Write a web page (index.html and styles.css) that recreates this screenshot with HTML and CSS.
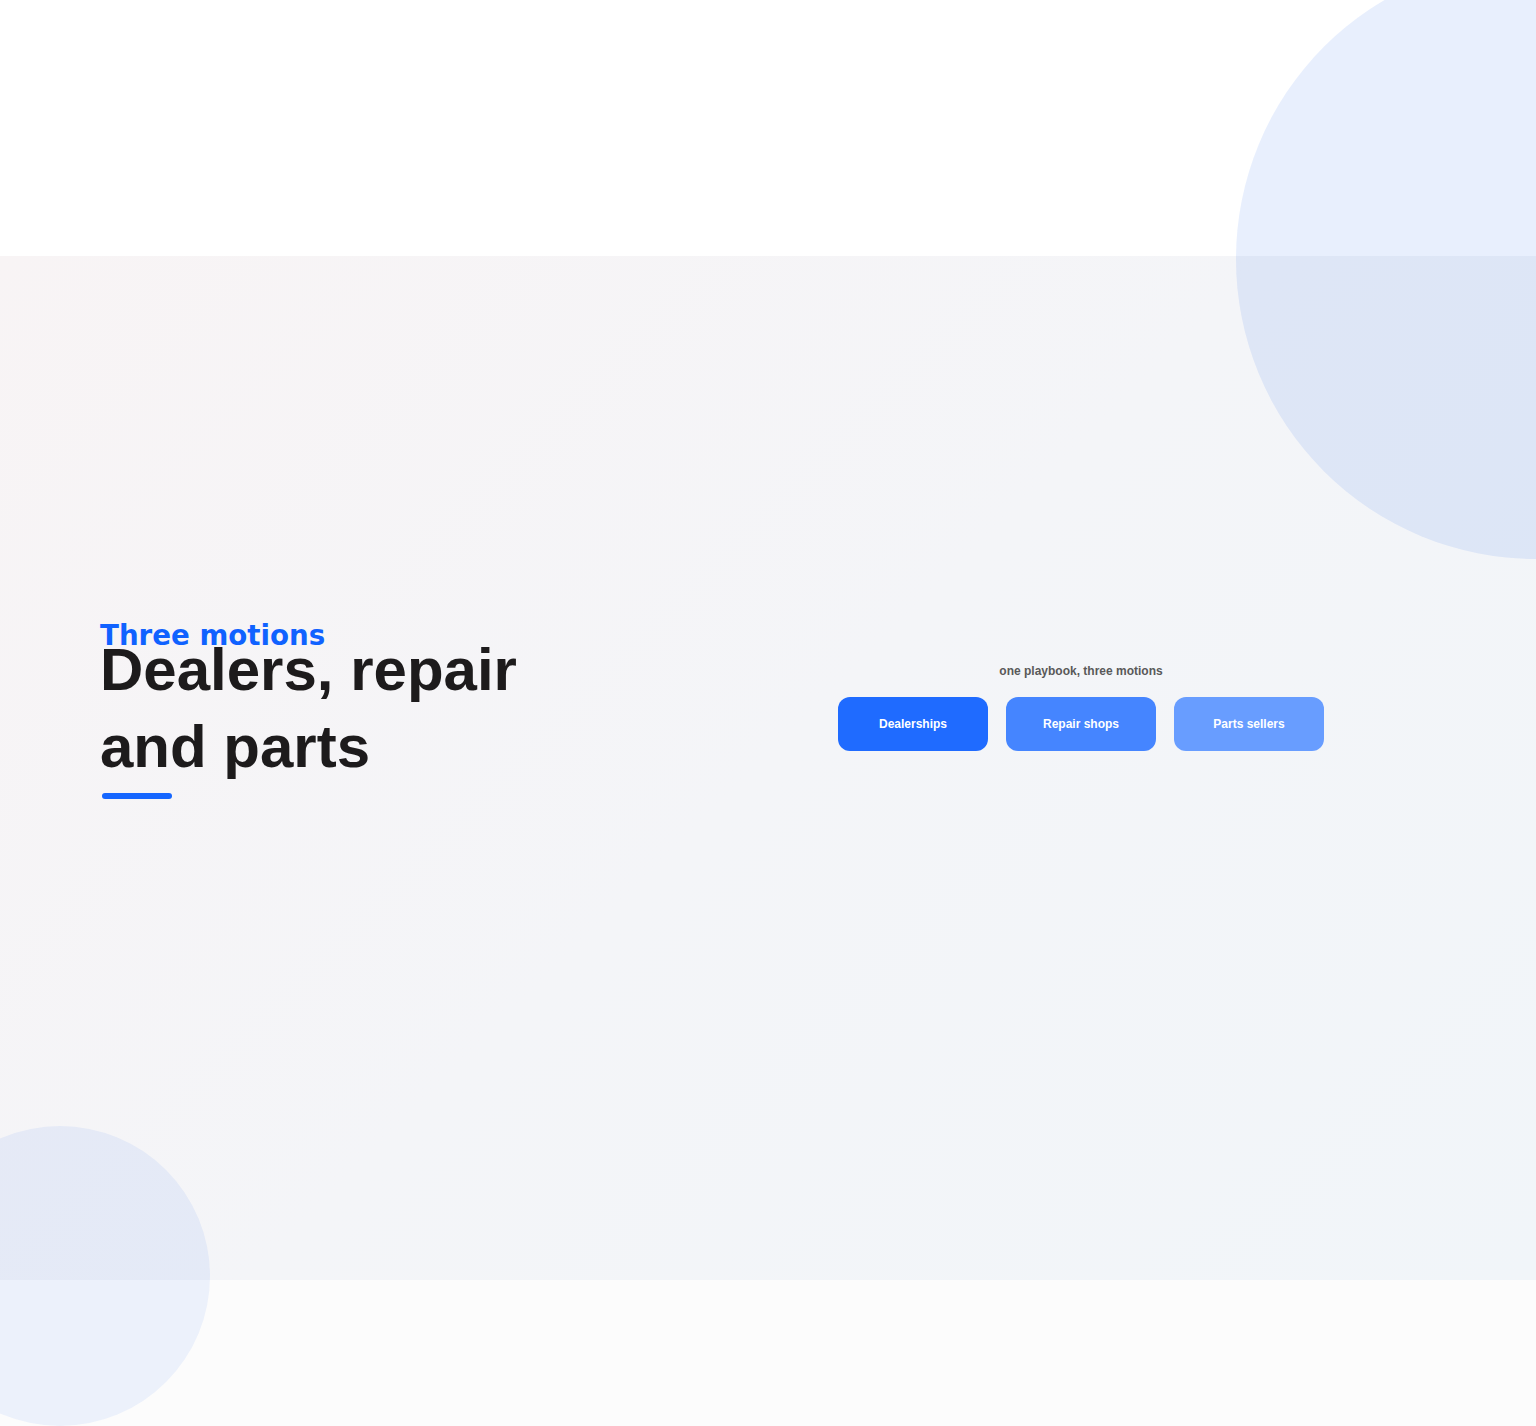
FILE: index.html
```html
<!DOCTYPE html>
<html>
  <head>
    <title>Three motions</title>
    <link rel="stylesheet" href="styles.css">
  </head>
  <body>
    <div class="page">
      <div class="spacer-top"></div>

      <section class="motions">
        <div class="intro">
          <div class="eyebrow">Three motions</div>
          <h1 class="title">Dealers, repair and parts</h1>
          <div class="rule"></div>
        </div>

        <div class="picker">
          <p class="picker-label">one playbook, three motions</p>
          <div class="picker-row">
            <button class="motion motion-1">Dealerships</button>
            <button class="motion motion-2">Repair shops</button>
            <button class="motion motion-3">Parts sellers</button>
          </div>
        </div>
      </section>

      <div class="spacer-bottom"></div>

      <div class="blob blob-top"></div>
      <div class="blob blob-bottom"></div>
    </div>
  </body>
</html>
```

FILE: styles.css
```css
html, body {
  margin: 0;
  background: #fff;
}

.page {
  position: relative;
  overflow: hidden;
  height: 1426px;
  font-family: "Liberation Sans", Arial, sans-serif;
}

.spacer-top {
  height: 256px;
  background: #fff;
}

.spacer-bottom {
  height: 146px;
  background: #fcfcfc;
}

.motions {
  box-sizing: border-box;
  height: 1024px;
  padding: 118px 100px 240px;
  display: grid;
  grid-template-columns: 626px 1fr;
  align-items: center;
  background: linear-gradient(135deg, #f8f4f5 0%, #f4f5f8 50%, #f1f5f9 100%);
}

.intro {
  margin-top: 6px;
}

.eyebrow {
  font-family: "DejaVu Sans", sans-serif;
  font-weight: bold;
  font-size: 27.7px;
  line-height: 28px;
  color: #1062ff;
}

.title {
  margin: -19px 0 0;
  font-size: 60px;
  line-height: 77px;
  font-weight: bold;
  color: #1d1b1c;
  max-width: 440px;
}

.rule {
  width: 70px;
  height: 6px;
  margin: 8px 0 0 2px;
  border-radius: 3px;
  background: #1566ff;
}

.picker {
  display: flex;
  flex-direction: column;
  align-items: center;
}

.picker-label {
  margin: 0 0 19px;
  font-size: 12px;
  font-weight: bold;
  color: #595959;
}

.picker-row {
  display: flex;
  gap: 18px;
}

.motion {
  width: 150px;
  height: 54px;
  border: none;
  border-radius: 12px;
  font-family: "Liberation Sans", Arial, sans-serif;
  font-size: 12px;
  font-weight: bold;
  color: #fff;
  cursor: pointer;
}

.motion-1 { background: #1f6bff; }
.motion-2 { background: #4585ff; }
.motion-3 { background: #689dff; }

/* soft decorative discs */
.blob {
  position: absolute;
  border-radius: 50%;
  pointer-events: none;
}

.blob-top {
  width: 600px;
  height: 600px;
  left: 1236px;
  top: -41px;
  background: rgba(30, 100, 240, 0.1);
}

.blob-bottom {
  width: 300px;
  height: 300px;
  left: -90px;
  top: 1126px;
  background: rgba(30, 100, 240, 0.07);
}
```
